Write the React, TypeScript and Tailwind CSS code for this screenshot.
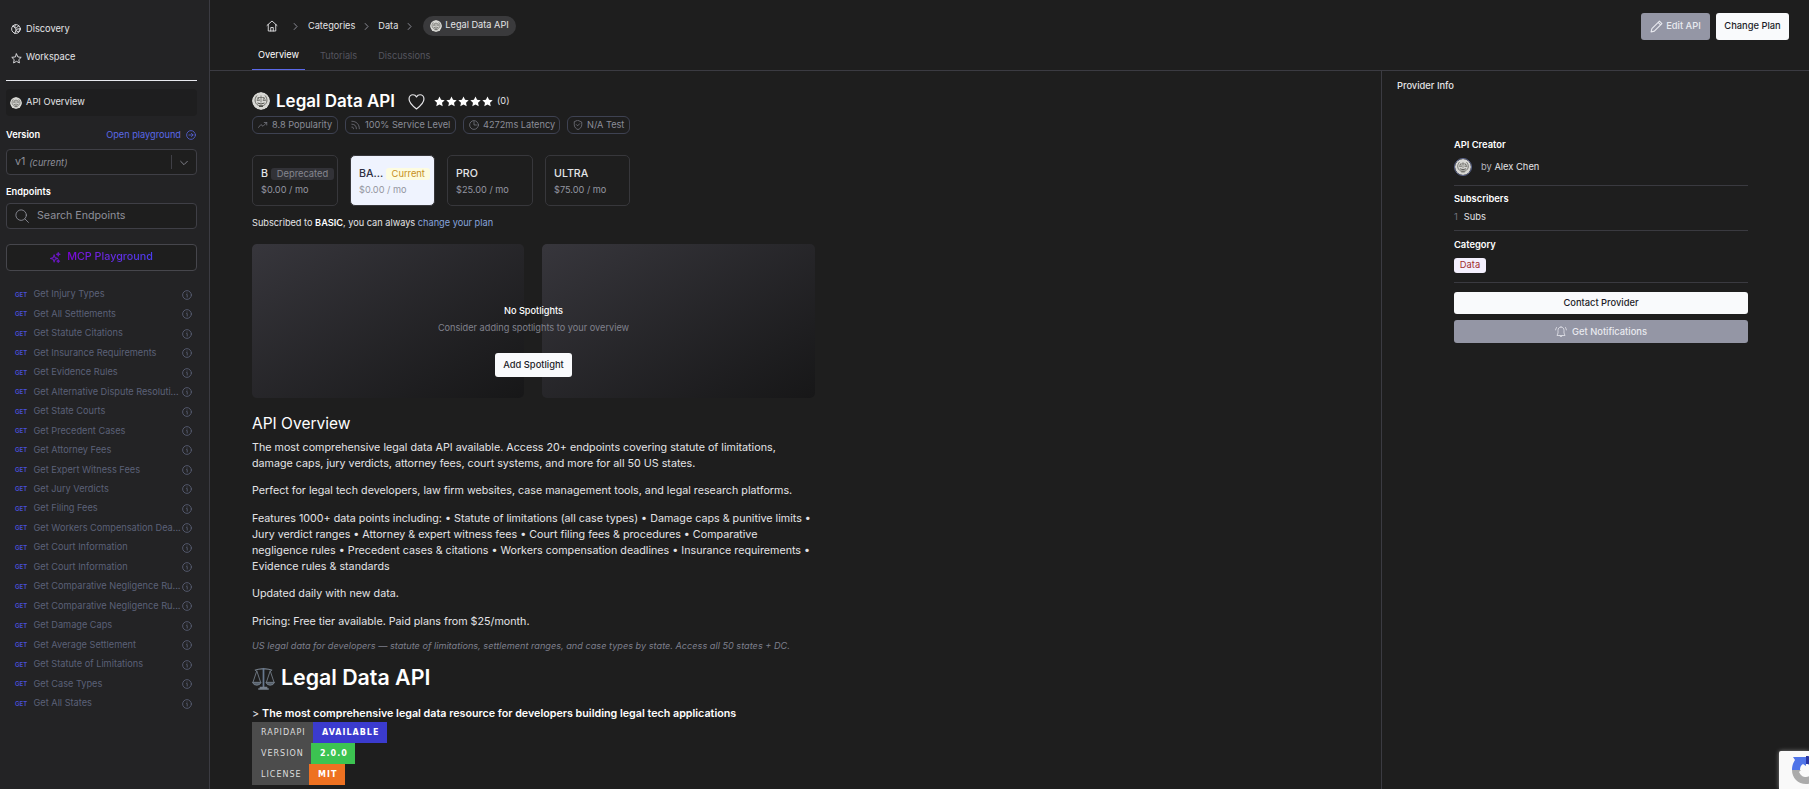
import clsx from "clsx";
import type { ReactNode } from "react";

const endpoints = [
    "Get Injury Types",
    "Get All Settlements",
    "Get Statute Citations",
    "Get Insurance Requirements",
    "Get Evidence Rules",
    "Get Alternative Dispute Resoluti...",
    "Get State Courts",
    "Get Precedent Cases",
    "Get Attorney Fees",
    "Get Expert Witness Fees",
    "Get Jury Verdicts",
    "Get Filing Fees",
    "Get Workers Compensation Dea...",
    "Get Court Information",
    "Get Court Information",
    "Get Comparative Negligence Ru...",
    "Get Comparative Negligence Ru...",
    "Get Damage Caps",
    "Get Average Settlement",
    "Get Statute of Limitations",
    "Get Case Types",
    "Get All States",
];

const badges = [
    { label: "RAPIDAPI", value: "AVAILABLE", labelClass: "w-[61px]", valueClass: "w-[74px] bg-[#3b3bce]" },
    { label: "VERSION", value: "2.0.0", labelClass: "w-[59px]", valueClass: "w-[44px] bg-[#3cc351]" },
    { label: "LICENSE", value: "MIT", labelClass: "w-[57px]", valueClass: "w-[36px] bg-[#ee7121]" },
];

function Icon({ className, children, width = 1.5 }: { className?: string; children: ReactNode; width?: number }) {
    return (
        <svg className={clsx("shrink-0", className)} viewBox="0 0 24 24" fill="none" stroke="currentColor" strokeWidth={width} strokeLinecap="round" strokeLinejoin="round">
            {children}
        </svg>
    );
}

function Chevron({ className }: { className?: string }) {
    return (
        <Icon className={clsx("size-[9px] text-[#a0a2ac]", className)} width={2.2}>
            <path d="M8.5 4l7.5 8-7.5 8" />
        </Icon>
    );
}

// Round seal with the scales of justice
function Seal({ className }: { className?: string }) {
    return (
        <svg className={clsx("shrink-0 rounded-full", className)} viewBox="0 0 36 36" fill="none">
            <circle cx="18" cy="18" r="18" fill="#d8d8d4" />
            <path d="M10 7c-6 7-5 16 3 20h10c8-4 9-13 3-20" stroke="#5d5d58" strokeWidth="1.8" />
            <path d="M18 7v14M12 11h12M12 11l-2 6h5zM24 11l-2 6h5z" stroke="#55554f" strokeWidth="1.3" />
            <path d="M11 22q7 4 14 0M14 29h8" stroke="#4f4f4a" strokeWidth="2" />
        </svg>
    );
}

function Sidebar() {
    return (
        <aside className="w-[210px] shrink-0 border-r border-[#3b3b42] bg-[#232325] pr-3 pl-1.5 text-[9.25px] text-[#e4e4e7]">
            <div className="mt-[15px] flex h-7 items-center gap-[5px] pl-[5px]">
                <Icon className="size-2.5" width={2.2}>
                    <circle cx="12" cy="12" r="10.5" />
                    <path d="M4 5l7 4 1 6-3 8M10 2l-1 7M13 9l6-5M14 13l-2 3 6 3 4-7z" />
                </Icon>
                <span>Discovery</span>
            </div>
            <div className="flex h-7 items-center gap-1 pl-[5px]">
                <Icon className="mt-0.5 size-[11px]" width={2}>
                    <path d="M12 2l3.1 6.6 7.2.9-5.3 5 1.4 7.2L12 18.2l-6.4 3.5L7 14.5l-5.3-5 7.2-.9z" />
                </Icon>
                <span>Workspace</span>
            </div>
            <div className="mt-[9px] h-px bg-[#e8e9ef]" />
            <div className="mt-2 flex h-[27px] items-center gap-1 rounded bg-[#1e1e1f] pb-px pl-1">
                <Seal className="mt-0.5 size-3" />
                <span>API Overview</span>
            </div>
            <div className="mt-3 flex h-[14px] items-center justify-between">
                <span className="font-semibold text-white">Version</span>
                <span className="flex items-center gap-[5px] text-[9.2px] text-[#5a68e8]">
                    Open playground
                    <Icon className="mt-px mr-px size-2.5" width={1.8}>
                        <circle cx="12" cy="12" r="10.5" />
                        <path d="M7 12h10M13 8l4 4-4 4" />
                    </Icon>
                </span>
            </div>
            <div className="mt-[7px] flex h-[26px] items-center rounded-sm border border-[#3f3f46] bg-[#1e1e1e] pl-2 text-[#8f909a]">
                <span className="text-[10.67px]">v1</span>
                <em className="mt-px ml-1 grow">(current)</em>
                <span className="h-[14px] w-px bg-[#3f3f46]" />
                <Icon className="mt-px mr-2 ml-2 size-2" width={2.6}>
                    <path d="M2 7l10 10L22 7" />
                </Icon>
            </div>
            <div className="mt-2.5 h-[14px] font-semibold text-white">Endpoints</div>
            <div className="mt-1 flex h-[26px] items-center gap-2 rounded border border-[#3f3f46] bg-[#1e1e1e] pl-2 text-[10.67px] text-[#8f909a]">
                <Icon className="size-[14px]">
                    <circle cx="10.5" cy="10.5" r="9" />
                    <path d="M17 17l6 6" />
                </Icon>
                Search Endpoints
            </div>
            <div className="mt-[15px] flex h-[27px] items-center justify-center gap-1.5 rounded-sm border border-[#46464c] bg-[#1e1e1e] pb-px text-[10.75px]">
                <svg className="size-[11px]" viewBox="0 0 24 24" fill="none" stroke="#6a17c4" strokeWidth="2.2" strokeLinejoin="round">
                    <path d="M9 6l2 6 6 2-6 2-2 6-2-6-6-2 6-2zM18 1l1 3 3 1-3 1-1 3-1-3-3-1 3-1zM18 17l1 2 2 1-2 1-1 2-1-2-2-1 2-1z" />
                </svg>
                <span className="bg-gradient-to-r from-[#7c00d8] to-[#4a3df0] bg-clip-text font-medium text-transparent">MCP Playground</span>
            </div>
            <ul className="mt-[13.5px] text-[9.2px] text-[#5b6178]">
                {endpoints.map((name, i) => (
                    <li key={i} className="flex h-[19.48px] items-center pl-[9px]">
                        <span className="w-[18.5px] shrink-0 text-[6px] font-semibold text-[#4a50dc]">GET</span>
                        <span className="w-[148px] shrink-0 whitespace-nowrap">{name}</span>
                        <Icon className="mt-px size-2.5" width={2}>
                            <circle cx="12" cy="12" r="10.5" />
                            <path d="M11 11h1.5v6M12 7v.5" />
                        </Icon>
                    </li>
                ))}
            </ul>
        </aside>
    );
}

function Header() {
    return (
        <header className="flex h-[71px] shrink-0 justify-between border-b border-[#3b3b42] text-[9.33px] text-[#e4e4e7]">
            <div className="text-[9.2px]">
                <div className="mt-4 ml-14 flex h-5 items-center">
                    <Icon className="size-3" width={1.8}>
                        <path d="M2 11L12 2l10 9M4.5 9v13h15V9M9.5 22v-7h5v7" />
                    </Icon>
                    <Chevron className="mr-2 ml-[13px]" />
                    <span>Categories</span>
                    <Chevron className="mx-[7px]" />
                    <span>Data</span>
                    <Chevron className="mx-[7px]" />
                    <span className="ml-0.5 flex h-5 w-[93px] items-center gap-[3px] rounded-full bg-[#3a3a3c] pl-[7px]">
                        <Seal className="size-3" />
                        <span className="-mt-0.5">Legal Data API</span>
                    </span>
                </div>
                <nav className="ml-[42px] flex h-[34px] text-[#55555f]">
                    <span className="flex w-[53px] justify-center border-b border-[#5a68e8] pt-3 leading-[14px] text-white">Overview</span>
                    <span className="ml-[15px] pt-[13px] leading-[14px]">Tutorials</span>
                    <span className="ml-[21px] pt-[13px] leading-[14px]">Discussions</span>
                </nav>
            </div>
            <div className="mt-[13px] mr-5 flex h-[27px] gap-1.5 font-medium">
                <button className="flex w-[69px] items-center justify-center gap-[3px] rounded-[3px] bg-[#9496a5] pb-px text-[#e9eaf0]">
                    <Icon className="size-[13px]" width={2}>
                        <path d="M2 22l1.5-6L17.5 2l4.5 4.5L8 20.5zM15 4.5L19.5 9" />
                    </Icon>
                    Edit API
                </button>
                <button className="w-[73px] rounded-[3px] bg-[#f9fafc] pb-px text-[#1c1c28]">Change Plan</button>
            </div>
        </header>
    );
}

function Pill({ className, children }: { className: string; children: ReactNode }) {
    return <span className={clsx("flex h-[18px] items-center rounded-md border border-[#3e4252] pl-[5px]", className)}>{children}</span>;
}

function Plan({ name, price, className, children }: { name: string; price: string; className: string; children?: ReactNode }) {
    return (
        <div className={clsx("h-[51px] rounded-[5px] border border-[#37373b] pt-[10px] pl-2", className)}>
            <div className="flex h-4 items-center gap-[3px] text-[10.67px] font-medium">
                <span>{name}</span>
                {children}
            </div>
            <div className="leading-[15px] text-[#9496a1]">{price}</div>
        </div>
    );
}

function Overview() {
    return (
        <main className="min-w-0 grow pl-[42px] text-[9.2px] text-[#e4e4e7]">
            <div className="mt-5 flex h-5 items-center">
                <Seal className="size-[18px]" />
                <h1 className="-mt-px ml-1.5 text-[17px] leading-5 font-semibold text-white">Legal Data API</h1>
                <Icon className="ml-[13px] size-[17px]" width={1.7}>
                    <path d="M12 22.5C6 18 1.5 14 1.5 8.5 1.5 5 4 2.5 7 2.5c2.200 0 4 1.200 5 3 1-1.800 2.800-3 5-3 3 0 5.500 2.500 5.500 6C22.500 14 18 18 12 22.500z" />
                </Icon>
                <div className="ml-[9px] flex gap-px text-white">
                    {[0, 1, 2, 3, 4].map((n) => (
                        <svg key={n} className="size-[11px]" viewBox="0 0 24 24" fill="currentColor">
                            <path d="M12 1l3.4 7.2 7.9 1-5.8 5.5 1.5 7.9L12 18.8l-7 3.8 1.5-7.9L.7 9.2l7.9-1z" />
                        </svg>
                    ))}
                </div>
                <span className="ml-1">(0)</span>
            </div>
            <div className="mt-[5px] flex gap-[7px] text-[#8b8d98]">
                <Pill className="w-[86px] gap-1">
                    <Icon className="size-2.5"><path d="M1 18l6-7 5 4L21 6M15 6h6v6" /></Icon>
                    8.8 Popularity
                </Pill>
                <Pill className="w-[111px] gap-1">
                    <Icon className="size-2.5"><path d="M2 3c11 0 18 7 18 18M2 10c7 0 11 4 11 11M2 17c3 0 4 1 4 4" /></Icon>
                    100% Service Level
                </Pill>
                <Pill className="w-[97px] gap-1">
                    <Icon className="size-2.5"><circle cx="12" cy="12" r="10.5" /><path d="M12 4v8h6" /></Icon>
                    4272ms Latency
                </Pill>
                <Pill className="w-[63px] gap-1">
                    <Icon className="size-2.5"><path d="M12 1l9 4v6c0 6-4 10-9 12-5-2-9-6-9-12V5zM8 11l3 3 5-5" /></Icon>
                    N/A Test
                </Pill>
            </div>
            <div className="mt-[21px] flex">
                <Plan name="B" price="$0.00 / mo" className="w-[86px]">
                    <span className="flex h-3 w-[63px] shrink-0 items-center justify-center rounded-[3px] bg-[#323237] text-[9.33px] font-normal text-[#85868f]">Deprecated</span>
                </Plan>
                <Plan name="BA..." price="$0.00 / mo" className="ml-3 w-[85px] bg-[#eff3fe] text-[#2e2e42]">
                    <span className="flex h-3 w-11 items-center justify-center rounded-[3px] bg-[#fdfce0] text-[9.33px] font-normal text-[#c78f1c]">Current</span>
                </Plan>
                <Plan name="PRO" price="$25.00 / mo" className="ml-3 w-[86px]" />
                <Plan name="ULTRA" price="$75.00 / mo" className="ml-3 w-[85px]" />
            </div>
            <p className="mt-[10px] leading-[14px]">
                Subscribed to <b className="font-semibold text-white">BASIC</b>, you can always <span className="text-[#86a3dc]">change your plan</span>
            </p>

            <div className="relative mt-3.5 grid h-[154px] w-[563px] grid-cols-[272px_273px] gap-[18px]">
                <div className="rounded-[5px] bg-gradient-to-br from-[#37363c] to-[#171718]" />
                <div className="rounded-[5px] bg-gradient-to-br from-[#37363c] to-[#171718]" />
                <div className="absolute inset-0 flex flex-col items-center pt-[60px]">
                    <span className="leading-[14px] font-medium text-white">No Spotlights</span>
                    <span className="mt-[3px] leading-[14px] text-[#80818c]">Consider adding spotlights to your overview</span>
                    <button className="mt-[18px] h-6 w-[77px] rounded-[3px] bg-[#f9fafc] text-[9.33px] font-medium text-[#1c1c28]">Add Spotlight</button>
                </div>
            </div>

            <article className="w-[563px] text-[10.73px] leading-[15.8px]">
                <h2 className="mt-4 text-[15.5px] leading-5 text-white">API Overview</h2>
                <p className="mt-[5.8px]">The most comprehensive legal data API available. Access 20+ endpoints covering statute of limitations, damage caps, jury verdicts, attorney fees, court systems, and more for all 50 US states.</p>
                <p className="mt-3">Perfect for legal tech developers, law firm websites, case management tools, and legal research platforms.</p>
                <p className="mt-3">Features 1000+ data points including: • Statute of limitations (all case types) • Damage caps & punitive limits • Jury verdict ranges • Attorney & expert witness fees • Court filing fees & procedures • Comparative negligence rules • Precedent cases & citations • Workers compensation deadlines • Insurance requirements • Evidence rules & standards</p>
                <p className="mt-3">Updated daily with new data.</p>
                <p className="mt-3">Pricing: Free tier available. Paid plans from $25/month.</p>
                <p className="mt-[8.5px] text-[9.16px] text-[#7d7f8c] italic">US legal data for developers — statute of limitations, settlement ranges, and case types by state. Access all 50 states + DC.</p>
                <h1 className="mt-2.5 flex h-7 items-center gap-1.5 text-[21.33px] font-semibold text-white">
                    <svg className="size-[23px]" viewBox="0 0 24 24" fill="none" stroke="#77818d" strokeWidth="0.9">
                        <path d="M3 3.5q4.5-2 9-1.5 4.5-.5 9 1.5" strokeWidth="1.3" />
                        <path d="M12 1v20" stroke="#66788f" strokeWidth="1.8" />
                        <path d="M5 4L1 16M5 4l4 12M19 4l-4 12M19 4l4 12" />
                        <path d="M.5 16h9q-1 3-4.5 3t-4.5-3zM14.5 16h9q-1 3-4.5 3t-4.5-3z" fill="#56606c" />
                        <path d="M8 21.5h8M6.5 23h11" strokeWidth="1.6" />
                    </svg>
                    Legal Data API
                </h1>
                <p className="mt-[13.5px]">
                    &gt; <b className="font-semibold text-white">The most comprehensive legal data resource for developers building legal tech applications</b>
                </p>
            </article>
            <div className="mt-[0.6px] font-['DejaVu_Sans',sans-serif] text-[8px] tracking-[1px] text-white">
                {badges.map((b) => (
                    <div key={b.label} className="flex h-[21px] items-center">
                        <span className={clsx("flex h-full items-center bg-[#4c4c4c] pt-px pl-[9px] text-[#dddddd]", b.labelClass)}>{b.label}</span>
                        <span className={clsx("flex h-full items-center pt-px pl-[9px] font-bold", b.valueClass)}>{b.value}</span>
                    </div>
                ))}
            </div>
        </main>
    );
}

function ProviderInfo() {
    return (
        <aside className="w-[428px] shrink-0 border-l border-[#3b3b42] pt-2 pl-[15px] text-[9.33px] leading-[14px] text-[#e4e4e7]">
            <h3 className="font-medium">Provider Info</h3>
            <div className="mt-[45px] ml-[57px] w-[294px]">
                <div className="border-b border-[#3a3a40] pb-[9px]">
                    <h4 className="font-semibold text-white">API Creator</h4>
                    <div className="mt-1.5 flex h-[18px] items-center">
                        <Seal className="size-[18px] border border-[#5d6790]" />
                        <span className="-mt-px ml-[9px] text-[#b4b5bd]">by <span className="text-[#e4e4e7]">Alex Chen</span></span>
                    </div>
                </div>
                <div className="border-b border-[#3a3a40] pt-1.5 pb-1.5">
                    <h4 className="font-semibold text-white">Subscribers</h4>
                    <div className="mt-1"><span className="mr-1.5 text-[#71727c]">1</span>Subs</div>
                </div>
                <div className="border-b border-[#3a3a40] pt-[7px] pb-[9px]">
                    <h4 className="font-semibold text-white">Category</h4>
                    <div className="mt-1.5 flex h-[15px] w-8 items-center justify-center rounded-[3px] bg-[#f4f0fe] pb-px text-[#a12c2c]">Data</div>
                </div>
                <button className="mt-[9px] h-[22px] w-full rounded-[3px] bg-[#f9fafc] font-medium text-[#1c1c28]">Contact Provider</button>
                <button className="mt-1.5 flex h-[23px] w-full items-center justify-center gap-[5px] rounded-[3px] bg-[#9496a5] font-medium text-[#e9eaf0]">
                    <Icon className="size-3">
                        <path d="M12 2c-4 0-6 3-6 7v5l-2 5h16l-2-5V9c0-4-2-7-6-7zM9.5 20q2.5 4 5 0M3 3L1 8M21 3l2 5" />
                    </Icon>
                    Get Notifications
                </button>
            </div>
        </aside>
    );
}

export default function App() {
    return (
        <div className="relative flex h-[789px] w-full overflow-hidden bg-[#1e1e1e] font-['Inter',sans-serif]">
            <Sidebar />
            <div className="flex min-w-0 grow flex-col">
                <Header />
                <div className="flex min-h-0 grow">
                    <Overview />
                    <ProviderInfo />
                </div>
            </div>
            {/* reCAPTCHA badge, mostly off the corner */}
            <div className="absolute right-0 bottom-0 h-[38px] w-[30px] overflow-hidden rounded-tl-[2px] bg-[#f9f9f9] shadow-[0_0_4px_#808080]">
                <svg className="mt-1 ml-3 size-[30px]" viewBox="0 0 30 30">
                    <path d="M1 15C1 11 2 8 4 5L2 2h13v9l-3-2c-2 1-3 3-3 6z" fill="#4f74e8" />
                    <path d="M15 1c6 0 9 2 12 5v9H19l3-3c-2-2-4-3-7-3z" fill="#2a35a0" />
                    <path d="M1 15h9l-2 2c2 4 4 5 7 5 3 0 6-2 7-5l6 5c-3 5-7 7-13 7C7 29 1 23 1 15z" fill="#ababab" />
                </svg>
            </div>
        </div>
    );
}
